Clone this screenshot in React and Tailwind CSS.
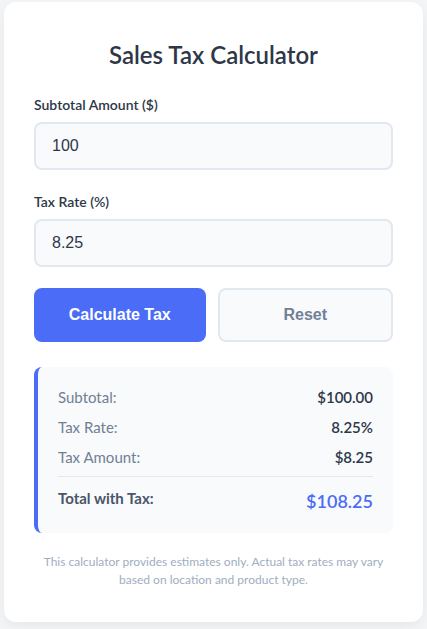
import { useState } from "react";

const ui = { fontFamily: 'Lato, "Noto Sans", sans-serif' };
const arial = { fontFamily: '"Liberation Sans", Arial, sans-serif' };

const App = () => {
  const [subtotal, setSubtotal] = useState("100");
  const [rate, setRate] = useState("8.25");
  const [result, setResult] = useState({ subtotal: 100, rate: 8.25 });

  const taxAmount = (result.subtotal * result.rate) / 100;
  const total = result.subtotal + taxAmount;

  const handleCalculate = () => {
    setResult({ subtotal: parseFloat(subtotal) || 0, rate: parseFloat(rate) || 0 });
  };

  const handleReset = () => {
    setSubtotal("");
    setRate("");
    setResult({ subtotal: 0, rate: 0 });
  };

  return (
    <div className="min-h-[629px] bg-[#f4f5f7] px-[4px] pt-[2px]" style={ui}>
      <div className="rounded-[12px] bg-white px-[30px] pb-[33px] pt-[37px] shadow-[0_4px_12px_rgba(0,0,0,0.06)]">
        <h1 className="text-center text-[24px] font-semibold leading-[32px] text-[#2d3748]">
          Sales Tax Calculator
        </h1>

        <div className="mt-[25px]">
          <label className="block text-[14px] font-semibold leading-[18px] text-[#2d3748]">
            Subtotal Amount ($)
          </label>
          <input
            value={subtotal}
            onChange={(e) => setSubtotal(e.target.value)}
            className="mt-[8px] h-[48px] w-full rounded-[8px] border-2 border-[#e2e8f0] bg-[#f8fafc] px-[16px] text-[16px] text-[#2d3748] outline-none"
            style={arial}
          />
        </div>

        <div className="mt-[23px]">
          <label className="block text-[14px] font-semibold leading-[18px] text-[#2d3748]">
            Tax Rate (%)
          </label>
          <input
            value={rate}
            onChange={(e) => setRate(e.target.value)}
            className="mt-[8px] h-[48px] w-full rounded-[8px] border-2 border-[#e2e8f0] bg-[#f8fafc] px-[16px] text-[16px] text-[#2d3748] outline-none"
            style={arial}
          />
        </div>

        <div className="mt-[21px] flex gap-[12px]">
          <button
            onClick={handleCalculate}
            className="h-[54px] flex-1 rounded-[8px] bg-[#4a6cf7] text-[16px] font-bold text-white"
            style={arial}
          >
            Calculate Tax
          </button>
          <button
            onClick={handleReset}
            className="h-[54px] flex-1 rounded-[8px] border-2 border-[#e2e8f0] bg-[#f8fafc] text-[16px] font-bold text-[#718096]"
            style={arial}
          >
            Reset
          </button>
        </div>

        <div className="mt-[25px] rounded-[8px] border-l-4 border-[#4a6cf7] bg-[#f8fafc] pb-[18px] pl-[20px] pr-[20px] pt-[20px]">
          <div className="flex flex-col gap-[10px] text-[15px] leading-[20px]">
            <div className="flex justify-between">
              <span className="font-normal text-[#718096]">Subtotal:</span>
              <span className="font-semibold text-[#2d3748]">${result.subtotal.toFixed(2)}</span>
            </div>
            <div className="flex justify-between">
              <span className="font-normal text-[#718096]">Tax Rate:</span>
              <span className="font-semibold text-[#2d3748]">{result.rate}%</span>
            </div>
            <div className="flex justify-between">
              <span className="font-normal text-[#718096]">Tax Amount:</span>
              <span className="font-semibold text-[#2d3748]">${taxAmount.toFixed(2)}</span>
            </div>
          </div>
          <div className="mt-[9px] flex items-start justify-between border-t border-[#e2e8f0] pt-[10px]">
            <span className="pt-[1px] text-[15px] font-bold leading-[20px] text-[#4a5568]">Total with Tax:</span>
            <span className="text-[18px] font-semibold leading-[28px] text-[#4a6cf7]">${total.toFixed(2)}</span>
          </div>
        </div>

        <p className="mt-[20px] text-center text-[12px] leading-[18px] text-[#a0aec0]">
          This calculator provides estimates only. Actual tax rates may vary based on location and product type.
        </p>
      </div>
    </div>
  );
};

export default App;
